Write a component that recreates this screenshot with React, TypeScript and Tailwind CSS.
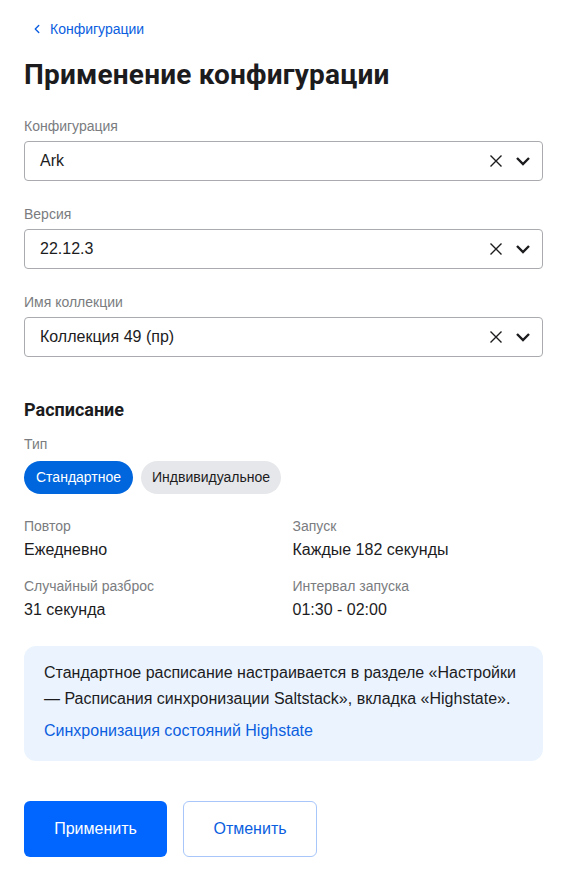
import { ChevronLeft } from "lucide-react";

const sans = "[font-family:'Liberation_Sans',Arial,sans-serif]";
const head = "[font-family:Roboto,sans-serif]";

function SelectField({ label, value }: { label: string; value: string }) {
  return (
    <div className="flex flex-col">
      <div className="text-[14px] leading-[20px] text-[#7a7c80] mb-[5px]">{label}</div>
      <div className="h-[40px] border border-[#a9abaf] rounded-[4px] flex items-center pl-[15px] pr-[10px]">
        <span className="flex-1 text-[16px] text-[#1c1c1e]">{value}</span>
        <svg width="16" height="16" viewBox="0 0 16 16" className="mr-[10px]">
          <path d="M2.5 2.5 L13.5 13.5 M13.5 2.5 L2.5 13.5" stroke="#1c1c1e" strokeWidth="1.4" fill="none" />
        </svg>
        <svg width="18" height="18" viewBox="0 0 18 18">
          <path d="M3 6 L9 12 L15 6" stroke="#1c1c1e" strokeWidth="2.4" fill="none" strokeLinejoin="miter" />
        </svg>
      </div>
    </div>
  );
}

function Info({ label, value }: { label: string; value: string }) {
  return (
    <div className="flex flex-col">
      <div className="text-[14px] leading-[20px] text-[#7a7c80]">{label}</div>
      <div className="text-[16px] leading-[22px] text-[#1c1c1e] mt-[3px]">{value}</div>
    </div>
  );
}

export default function App() {
  return (
    <main className={`${sans} bg-white w-[563px] min-h-[871px] pl-[24px] pr-[20px] pt-[19px] pb-[14px]`}>
      <a className="flex items-center gap-[6px] text-[14px] leading-[20px] text-[#0b5ee0] ml-[6px]">
        <ChevronLeft size={14} strokeWidth={2.4} />
        Конфигурации
      </a>

      <h1 className={`${head} font-bold text-[28px] leading-[36px] text-[#1c1c1e] mt-[18px] tracking-[0.2px]`}>
        Применение конфигурации
      </h1>

      <div className="mt-[23px] flex flex-col gap-[23px]">
        <SelectField label="Конфигурация" value="Ark" />
        <SelectField label="Версия" value="22.12.3" />
        <SelectField label="Имя коллекции" value="Коллекция 49 (пр)" />
      </div>

      <h2 className={`${head} font-bold text-[18px] leading-[24px] text-[#1c1c1e] mt-[41px]`}>
        Расписание
      </h2>

      <div className="text-[14px] leading-[20px] text-[#7a7c80] mt-[12px]">Тип</div>
      <div className="flex gap-[8px] mt-[7px]">
        <button className="h-[33px] px-[12px] rounded-full bg-[#0066dd] text-white text-[14px]">Стандартное</button>
        <button className="h-[33px] px-[11px] rounded-full bg-[#e6e7ea] text-[#1c1c1e] text-[14px]">Индвивидуальное</button>
      </div>

      <div className="grid grid-cols-2 gap-x-[18px] gap-y-[15px] mt-[22px]">
        <Info label="Повтор" value="Ежедневно" />
        <Info label="Запуск" value="Каждые 182 секунды" />
        <Info label="Случайный разброс" value="31 секунда" />
        <Info label="Интервал запуска" value="01:30 - 02:00" />
      </div>

      <div className="mt-[25px] rounded-[12px] bg-[#ebf4fe] pl-[20px] pr-[18px] pt-[14px] pb-[20px]">
        <p className="text-[16px] leading-[26px] text-[#1c1c1e]">
          Стандартное расписание настраивается в разделе «Настройки — Расписания синхронизации Saltstack», вкладка «Highstate».
        </p>
        <a className="block mt-[9px] text-[16px] leading-[20px] text-[#0b5ee0]">Синхронизация состояний Highstate</a>
      </div>

      <div className="flex gap-[16px] mt-[40px]">
        <button className="h-[56px] w-[143px] rounded-[6px] bg-[#0066ff] text-white text-[16px]">Применить</button>
        <button className="h-[56px] w-[134px] rounded-[6px] border border-[#a8c6fa] bg-white text-[#0b5ee0] text-[16px]">Отменить</button>
      </div>
    </main>
  );
}
